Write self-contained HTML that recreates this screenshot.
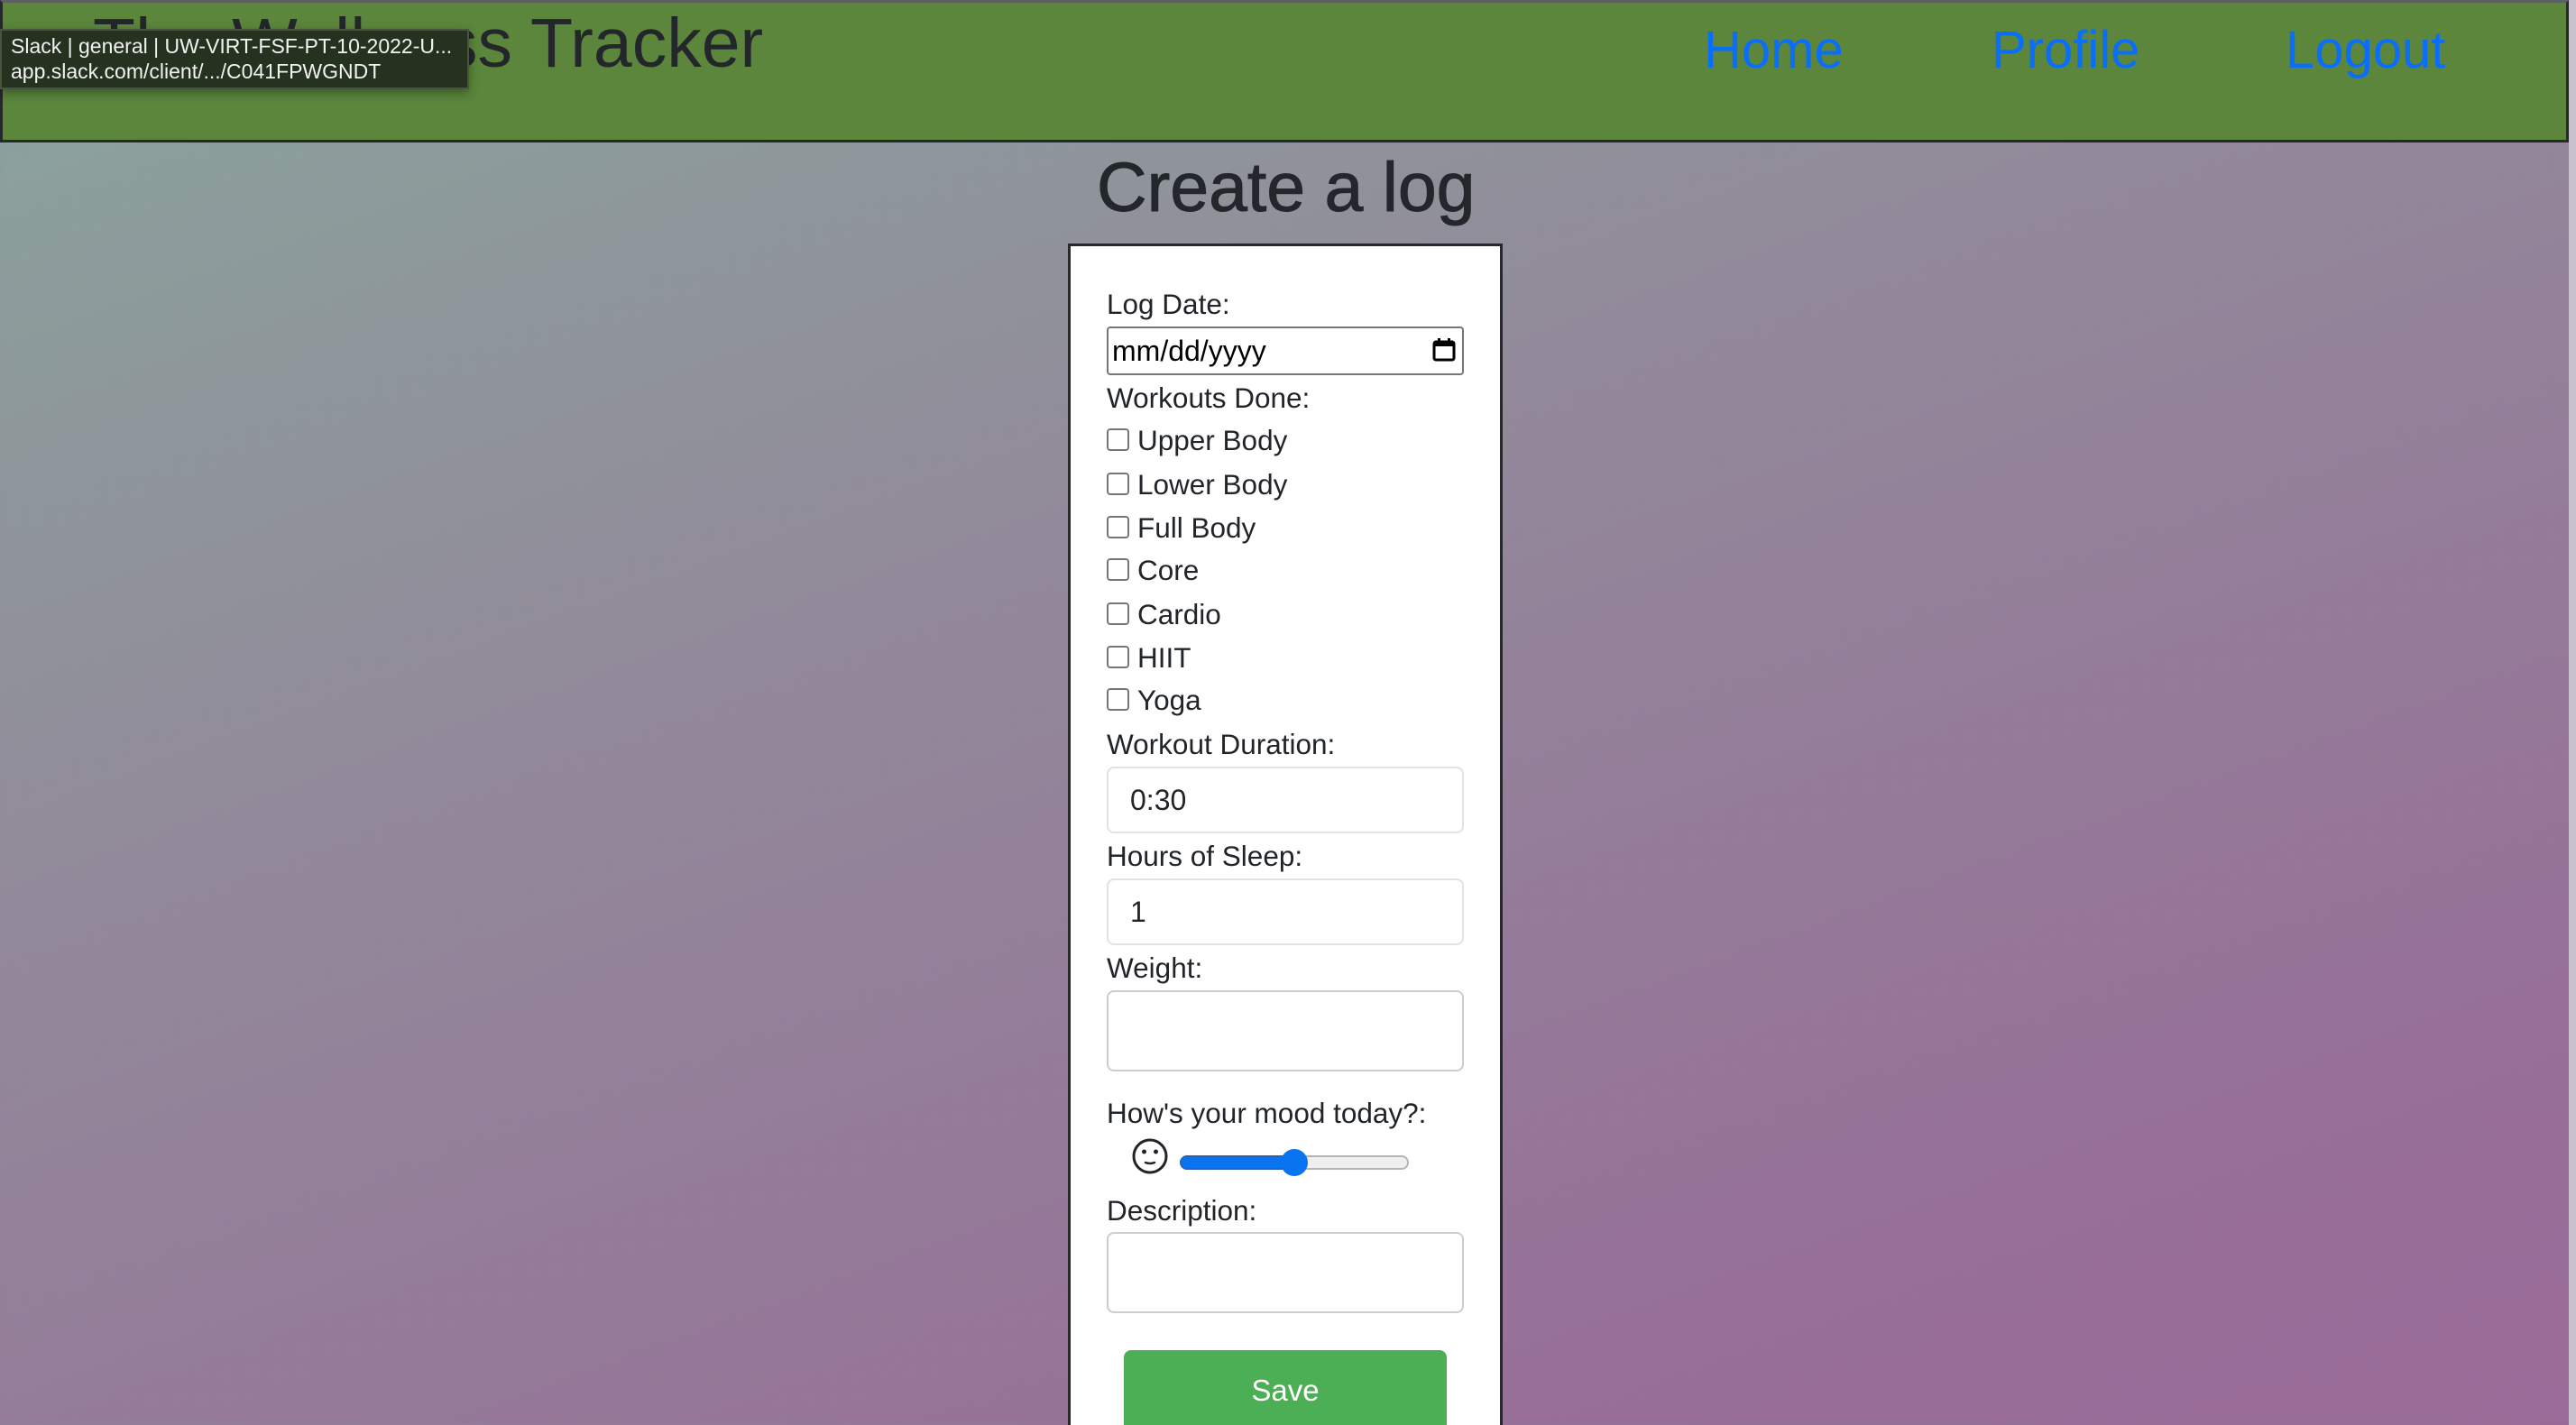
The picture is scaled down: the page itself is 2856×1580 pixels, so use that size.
<!DOCTYPE html>
<html><head><meta charset="utf-8"><style>
*{margin:0;padding:0;box-sizing:border-box}
html,body{width:2856px;height:1580px;overflow:hidden}
body{position:relative;font-family:"Liberation Sans",Arial,sans-serif;color:#212529;
background:linear-gradient(160deg,#8aa59c 0%,#92899a 40%,#976e98 85%,#9a6b98 100%)}
.a{position:absolute;white-space:nowrap;line-height:1}
.hdr{position:absolute;left:0;top:0;width:2848px;height:158px;background:#5b863b;border:3px solid #25292b;border-top:3px solid #5c6063}
.nav{color:#0a6efc;font-size:58px}
.lbl{font-size:31.5px;color:#212529}
.inp{position:absolute;left:1227px;width:396px;background:#fff;border:2px solid #dfe2e6;border-radius:8px}
.cb{position:absolute;left:1227px;width:25px;height:25px;border:2px solid #767676;border-radius:4px;background:#fff}
</style></head><body>
<div class="hdr"></div>
<div class="a" style="left:103px;top:10px;font-size:77px;color:#23272b">The Wellness Tracker</div>
<div class="a nav" style="left:1889px;top:27px">Home</div>
<div class="a nav" style="left:2208px;top:27px">Profile</div>
<div class="a nav" style="left:2534px;top:27px">Logout</div>
<div style="position:absolute;left:2848px;top:0;width:8px;height:1580px;background:#c9c2cc"></div>
<div style="position:absolute;left:0;top:32px;width:520px;height:67px;background:#25321f;border:2px solid #47553f;box-shadow:0 4px 10px rgba(0,0,0,.35)"></div>
<div class="a" style="left:12px;top:40px;font-size:23px;color:#f2f2f2">Slack | general | UW-VIRT-FSF-PT-10-2022-U...</div>
<div class="a" style="left:12px;top:68px;font-size:23px;color:#f2f2f2">app.slack.com/client/.../C041FPWGNDT</div>

<div class="a" style="left:1216px;top:170px;font-size:77px;color:#23272b;-webkit-text-stroke:1px #23272b">Create a log</div>

<div style="position:absolute;left:1184px;top:270px;width:482px;height:1320px;background:#fff;border:3px solid #25292b"></div>

<div class="a lbl" style="left:1227px;top:322px">Log Date:</div>
<div style="position:absolute;left:1227px;top:362px;width:396px;height:54px;border:2px solid #767676;border-radius:4px;background:#fff"></div>
<div class="a" style="left:1233px;top:373px;font-size:32px;color:#000">mm/dd/yyyy</div>
<svg style="position:absolute;left:1588px;top:374px" width="26" height="28" viewBox="0 0 26 28"><rect x="2" y="5" width="22" height="20" rx="2" fill="none" stroke="#000" stroke-width="3"/><rect x="2" y="5" width="22" height="5" fill="#000"/><rect x="6" y="1" width="3" height="6" fill="#000"/><rect x="17" y="1" width="3" height="6" fill="#000"/></svg>

<div class="a lbl" style="left:1227px;top:426px">Workouts Done:</div>
<div class="cb" style="top:475px"></div><div class="a lbl" style="left:1261px;top:473px">Upper Body</div>
<div class="cb" style="top:524px"></div><div class="a lbl" style="left:1261px;top:522px">Lower Body</div>
<div class="cb" style="top:572px"></div><div class="a lbl" style="left:1261px;top:570px">Full Body</div>
<div class="cb" style="top:619px"></div><div class="a lbl" style="left:1261px;top:617px">Core</div>
<div class="cb" style="top:668px"></div><div class="a lbl" style="left:1261px;top:666px">Cardio</div>
<div class="cb" style="top:716px"></div><div class="a lbl" style="left:1261px;top:714px">HIIT</div>
<div class="cb" style="top:763px"></div><div class="a lbl" style="left:1261px;top:761px">Yoga</div>

<div class="a lbl" style="left:1227px;top:810px">Workout Duration:</div>
<div class="inp" style="top:850px;height:74px"></div>
<div class="a" style="left:1253px;top:871px;font-size:32px">0:30</div>
<div class="a lbl" style="left:1227px;top:934px">Hours of Sleep:</div>
<div class="inp" style="top:974px;height:74px"></div>
<div class="a" style="left:1253px;top:995px;font-size:32px">1</div>
<div class="a lbl" style="left:1227px;top:1058px">Weight:</div>
<div class="inp" style="top:1098px;height:90px;border-color:#cdcdcd"></div>

<div class="a lbl" style="left:1227px;top:1219px">How's your mood today?:</div>
<svg style="position:absolute;left:1254px;top:1261px" width="42" height="42" viewBox="0 0 42 42"><circle cx="21" cy="21" r="18" fill="none" stroke="#212529" stroke-width="3"/><circle cx="14.5" cy="16" r="2.5" fill="#212529"/><circle cx="27.5" cy="16" r="2.5" fill="#212529"/><path d="M16 28 Q21 30 26 28" fill="none" stroke="#212529" stroke-width="2.5" stroke-linecap="round"/></svg>
<div style="position:absolute;left:1308px;top:1281px;width:254px;height:16px;border-radius:8px;background:#efefef;border:2px solid #b5b5b5"></div>
<div style="position:absolute;left:1308px;top:1281px;width:130px;height:16px;border-radius:8px;background:#0a74f0;border:2px solid #2a62b8"></div>
<div style="position:absolute;left:1420px;top:1274px;width:30px;height:30px;border-radius:50%;background:#0a74f0"></div>

<div class="a lbl" style="left:1227px;top:1327px">Description:</div>
<div class="inp" style="top:1366px;height:90px;border-color:#cdcdcd"></div>

<div style="position:absolute;left:1246px;top:1497px;width:358px;height:100px;background:#4caf55;border-radius:8px"></div>
<div class="a" style="left:1246px;width:358px;text-align:center;top:1525px;font-size:33px;color:#fff">Save</div>
</body></html>
